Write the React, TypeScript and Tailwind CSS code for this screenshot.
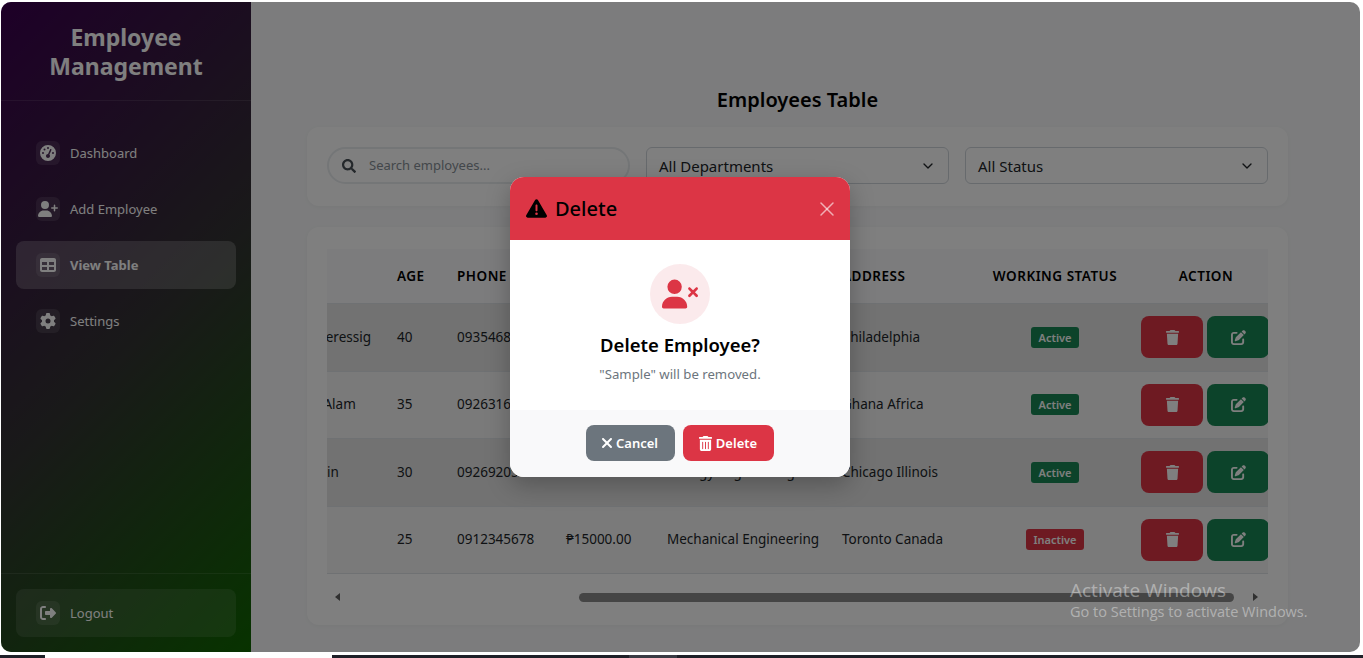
import { FaSearch } from 'react-icons/fa';
import { FaGaugeHigh, FaGear, FaPenToSquare, FaRightFromBracket, FaTable, FaTrash, FaTrashCan, FaTriangleExclamation, FaUserPlus, FaUserXmark, FaXmark } from 'react-icons/fa6';
import { ChevronDown, X } from 'lucide-react';
import type { ReactNode } from 'react';

const rows = [
  { name: 'Johnathan Heressig', age: '40', phone: '09354681234', salary: '₱25000.00', dept: 'Civil Engineering', address: 'Philadelphia', status: 'Active' },
  { name: 'Mohamed I Alam', age: '35', phone: '09263167890', salary: '₱30000.00', dept: 'Computer Science', address: 'Ghana Africa', status: 'Active' },
  { name: 'Sara Goldstein', age: '30', phone: '09269205678', salary: '₱20000.00', dept: 'Biology Engineering', address: 'Chicago Illinois', status: 'Active' },
  { name: 'Sample', age: '25', phone: '0912345678', salary: '₱15000.00', dept: 'Mechanical Engineering', address: 'Toronto Canada', status: 'Inactive' },
];

function NavItem({ icon, label, active }: { icon: ReactNode; label: string; active?: boolean }) {
  return (
    <div className={`flex h-12 items-center gap-[10px] whitespace-nowrap rounded-lg px-5 text-[13px] text-white ${active ? 'bg-white/20 font-bold' : ''}`}>
      <span className="flex h-6 w-6 items-center justify-center rounded-md bg-white/10">{icon}</span>
      <span className="pt-[2px]">{label}</span>
    </div>
  );
}

function Select({ label }: { label: string }) {
  return (
    <div className="flex h-[37px] w-[303px] items-center justify-between rounded-md border border-[#ced4da] bg-white px-[12px] text-[15px] text-[#212529]">
      <span className="pt-px">{label}</span>
      <ChevronDown size={16} strokeWidth={2} />
    </div>
  );
}

export default function App() {
  return (
    <div className="relative h-[658px] w-[1363px] overflow-hidden bg-white font-['Noto_Sans','Open_Sans',sans-serif]">
      <div className="relative ml-px mt-[2px] flex h-[650px] w-[1359px] overflow-hidden rounded-[10px] bg-[#f8f9fa]">
        {/* Sidebar */}
        <aside className="flex w-[250px] shrink-0 flex-col bg-[linear-gradient(135deg,#3c0050_0%,#333333_52%,#0f6600_100%)] text-white">
          <div className="flex h-[99px] items-start justify-center border-b border-white/10 pt-[21px] text-center text-[23px] font-bold leading-[29px]">
            Employee<br />Management
          </div>
          <nav className="flex flex-1 flex-col gap-2 px-[15px] pt-7">
            <NavItem icon={<FaGaugeHigh size={16} />} label="Dashboard" />
            <NavItem icon={<FaUserPlus size={20} />} label="Add Employee" />
            <NavItem icon={<FaTable size={16} />} label="View Table" active />
            <NavItem icon={<FaGear size={16} />} label="Settings" />
          </nav>
          <div className="border-t border-white/10 p-[15px]">
            <div className="rounded-lg bg-white/10">
              <NavItem icon={<FaRightFromBracket size={16} />} label="Logout" />
            </div>
          </div>
        </aside>

        {/* Main */}
        <main className="flex min-w-0 flex-1 flex-col pl-[56px] pr-[72px] pt-[84px]">
          <h1 className="mb-[13px] h-[28px] text-center text-[20px] font-semibold leading-[28px] text-black">Employees Table</h1>
          <div className="mb-[21px] flex h-[79px] items-start gap-4 rounded-xl bg-white px-5 pt-[20px] shadow-[0_1px_4px_rgba(0,0,0,0.04)]">
            <div className="flex h-[37px] w-[303px] items-center gap-[13px] rounded-full border-2 border-[#e9ecef] px-[13px] text-[13px] text-[#868e96]">
              <FaSearch className="text-[14px] text-[#495057]" />
              <span className="pt-px">Search employees...</span>
            </div>
            <Select label="All Departments" />
            <Select label="All Status" />
          </div>

          <div className="h-[398px] rounded-xl bg-white px-5 pt-[22px] shadow-[0_1px_4px_rgba(0,0,0,0.04)]">
            <div className="overflow-hidden">
              <div className="ml-[-120px] w-[1200px] border-b border-[#dee2e6]">
                <div className="flex h-[54px] items-center bg-[#f8f9fa] text-[13.5px] font-semibold tracking-[0.5px] text-black">
                  <div className="w-[190px]" />
                  <div className="w-[60px]">AGE</div>
                  <div className="w-[109px]">PHONE</div>
                  <div className="w-[101px]">SALARY</div>
                  <div className="w-[175px]">DEPARTMENT</div>
                  <div className="w-[126px]">ADDRESS</div>
                  <div className="w-[174px] text-center">WORKING STATUS</div>
                  <div className="w-[128px] text-center">ACTION</div>
                </div>
                {rows.map((r, i) => (
                  <div key={r.name} className={`flex items-center border-t border-[#dee2e6] pb-px text-[13.5px] text-[#212529] ${i % 2 === 0 ? 'h-[68px] bg-[#e4e4e4]' : 'h-[67px] bg-[#f5f5f5]'}`}>
                    <div className="w-[190px] whitespace-nowrap pl-10">{r.name}</div>
                    <div className="w-[60px]">{r.age}</div>
                    <div className="w-[109px]">{r.phone}</div>
                    <div className="w-[101px]">{r.salary}</div>
                    <div className="w-[175px] whitespace-nowrap">{r.dept}</div>
                    <div className="w-[126px] whitespace-nowrap">{r.address}</div>
                    <div className="flex w-[174px] justify-center">
                      <span className={`min-w-[48px] rounded-[3px] px-[7px] py-[3px] text-center text-[11px] font-semibold leading-[15px] text-white ${r.status === 'Active' ? 'bg-[#198754]' : 'bg-[#dc3545]'}`}>{r.status}</span>
                    </div>
                    <div className="-ml-px flex gap-1">
                      <span className="flex h-[42px] w-[62px] items-center justify-center rounded-lg bg-[#dc3545] text-white"><FaTrash size={15} /></span>
                      <span className="flex h-[42px] w-[62px] items-center justify-center rounded-lg bg-[#198754] text-white"><FaPenToSquare size={15} /></span>
                    </div>
                  </div>
                ))}
              </div>
            </div>
            <div className="mt-[11px] flex h-[24px] items-center">
              <span className="ml-[8px] h-0 w-0 border-y-[4px] border-r-[5px] border-y-transparent border-r-[#606060]" />
              <span className="ml-[239px] h-[9px] w-[655px] rounded-full bg-[#8a8a8a]" />
              <span className="ml-[19px] h-0 w-0 border-y-[4px] border-l-[5px] border-y-transparent border-l-[#606060]" />
            </div>
          </div>
        </main>

        {/* Backdrop */}
        <div className="absolute inset-0 bg-black/50" />
      </div>

      {/* Delete modal */}
      <div className="absolute left-[510px] top-[177px] flex h-[300px] w-[340px] flex-col overflow-hidden rounded-[14px] bg-white shadow-[0_8px_24px_rgba(0,0,0,0.25)]">
        <div className="flex h-[63px] items-center justify-between bg-[#dc3545] pl-4 pr-[11px]">
          <div className="flex items-center gap-2 text-[20px] font-medium text-black">
            <FaTriangleExclamation size={21} />
            <span className="pt-px">Delete</span>
          </div>
          <X size={24} strokeWidth={1.5} className="text-white/60" />
        </div>
        <div className="flex flex-1 flex-col items-center pt-6">
          <div className="flex h-[60px] w-[60px] items-center justify-center rounded-full bg-[#dc3545]/10 text-[#dc3545]">
            <FaUserXmark size={36} />
          </div>
          <div className="mt-[7px] text-[18.5px] font-semibold leading-[28px] text-black">Delete Employee?</div>
          <div className="mt-[6px] text-[13.2px] leading-[18px] text-[#6c757d]">"Sample" will be removed.</div>
        </div>
        <div className="flex h-[67px] justify-center gap-2 bg-[#f9f9fa] pt-[15px]">
          <span className="flex h-[36px] w-[89px] items-center justify-center gap-px rounded-lg bg-[#6c757d] pr-1 text-[13px] font-semibold text-white"><FaXmark size={16} /><span className="pt-[2px]">Cancel</span></span>
          <span className="flex h-[36px] w-[91px] items-center justify-center gap-[3px] rounded-lg bg-[#dc3545] pr-[2px] text-[13px] font-semibold text-white"><FaTrashCan size={15} /><span className="pt-[2px]">Delete</span></span>
        </div>
      </div>

      {/* Activation watermark */}
      <div className="absolute left-[1070px] top-[578px] font-['Open_Sans',sans-serif] text-white/40">
        <div className="text-[19px] leading-[24px]">Activate Windows</div>
        <div className="text-[14.5px] leading-[20px]">Go to Settings to activate Windows.</div>
      </div>

      {/* Taskbar sliver */}
      <div className="absolute bottom-0 left-0 flex h-[3px] w-full bg-white">
        <div className="w-[45px] bg-[#1f2028]" />
        <div className="w-[287px]" />
        <div className="w-[297px] bg-[#1f2028]" />
        <div className="w-[48px] bg-[#3a3b44]" />
        <div className="flex-1 bg-[#1f2028]" />
      </div>
    </div>
  );
}
